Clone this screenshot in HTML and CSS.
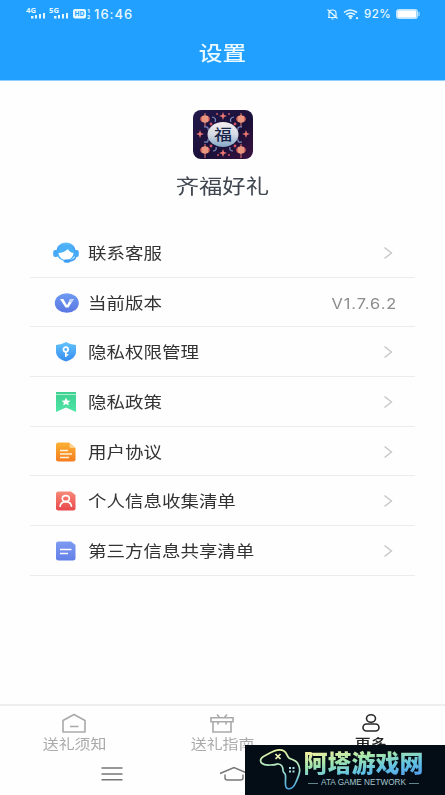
FILE: index.html
```html
<!DOCTYPE html>
<html lang="zh-CN">
<head>
<meta charset="utf-8">
<title>设置</title>
<link rel="stylesheet" href="styles.css">
</head>
<body>
<div class="screen">
  <header class="header">
    <div class="status">
      <svg class="signals" width="66" height="14" viewBox="0 0 66 14" fill="#e6f8ff">
        <text x="0" y="6" class="net" textLength="10" lengthAdjust="spacingAndGlyphs">4G</text>
        <path d="M5 9h2.500v2.500h-2.500zM9 8h2v3.500H9zM13 7h2v4.500h-2zM17 6h2v5.500h-2z"/>
        <text x="23" y="6" class="net" textLength="10" lengthAdjust="spacingAndGlyphs">5G</text>
        <path d="M28 9h2.500v2.500H28zM32 8h2v3.500h-2zM36 7h2v4.500h-2zM40 6h2v5.500h-2z"/>
        <rect x="47" y="2" width="13" height="9.500" rx="2"/>
        <text x="48.500" y="9.400" class="hd" textLength="10" lengthAdjust="spacingAndGlyphs">HD</text>
        <text x="61" y="6.300" class="sim">1</text><text x="61" y="11.800" class="sim">2</text>
      </svg>
      <span class="clock">16:46</span>
      <svg class="status-right" width="34" height="14" viewBox="0 0 34 14" fill="none" stroke="#e6f8ff" stroke-width="1.200">
        <path d="M2 10.500h9M3 10V6q0-3 3.500-3T10 6v4M5.500 12h2M1.500 2.500l10 9"/>
        <path d="M18 5.500q6-5 13 0M20 7.700q4.500-3.500 9 0M22.300 9.700q2.200-1.800 4.400 0" stroke-width="1.600"/>
        <circle cx="24.500" cy="11" r=".7" fill="#e6f8ff"/><circle cx="31" cy="11.200" r=".5"/>
      </svg>
      <span class="percent">92%</span>
      <svg width="26" height="12" viewBox="0 0 26 12"><rect x=".5" y="1.500" width="21" height="9" rx="2" fill="#9bd5ff" stroke="#bfe4ff"/><rect x="1.500" y="2.500" width="18.500" height="7" rx=".5" fill="#fff"/><path d="M23 4v4" stroke="#8fd0ff" stroke-width="1.500"/></svg>
    </div>
    <h1 class="title"><span class="wide">设置</span></h1>
  </header>

  <section class="brand">
    <svg class="logo" width="60" height="49" viewBox="0 0 60 49">
      <defs>
        <linearGradient id="night" x1="0" y1="0" x2="1" y2="1"><stop offset="0" stop-color="#22184a"/><stop offset=".6" stop-color="#1b1038"/><stop offset="1" stop-color="#3c123f"/></linearGradient>
        <linearGradient id="moon" x1="0" y1="0" x2="0" y2="1"><stop offset="0" stop-color="#f6eef0"/><stop offset=".5" stop-color="#d5dae4"/><stop offset="1" stop-color="#84a6c8"/></linearGradient>
        <g id="lamp"><ellipse rx="4.800" ry="3.800" fill="#d8685f"/><path d="M-2-3v6M0-4v8M2-3v6" stroke="#ffd0a8" stroke-width=".9"/><path d="M0-6v2M0 4v4" stroke="#e27872"/></g>
        <path id="spark" d="M0-4l1 3 3 1-3 1-1 3-1-3-3-1 3-1z" fill="#ee7775"/>
      </defs>
      <rect width="60" height="49" rx="8" fill="url(#night)"/>
      <use href="#lamp" x="12" y="9"/><use href="#lamp" x="48" y="9"/><use href="#lamp" x="12" y="40"/><use href="#lamp" x="48" y="40"/>
      <use href="#spark" x="30" y="6"/><use href="#spark" x="7" y="24"/><use href="#spark" x="53" y="24"/><use href="#spark" x="30" y="43"/>
      <g fill="none" stroke="#7f91c5" stroke-width="1.200"><path d="M19 7q5 1 3 5M41 7q-5 1-3 5M11 17q5-1 4 3M49 17q-5-1-4 3M11 32q5 1 4-3M49 32q-5 1-4-3M20 41q4 0 3-4M40 41q-4 0-3-4"/></g>
      <g fill="#ce5666"><circle cx="18" cy="14" r="1.400"/><circle cx="42" cy="14" r="1.400"/><circle cx="18" cy="36" r="1.400"/><circle cx="42" cy="36" r="1.400"/><circle cx="24" cy="4" r="1"/><circle cx="36" cy="4" r="1"/><circle cx="25" cy="45" r="1"/><circle cx="36" cy="45" r="1"/></g>
      <ellipse cx="30" cy="24.500" rx="15.500" ry="12.500" fill="url(#moon)"/>
      <text x="21" y="30" class="fu" textLength="18" lengthAdjust="spacingAndGlyphs">福</text>
    </svg>
    <h2 class="name"><span class="wide">齐福好礼</span></h2>
  </section>

  <svg width="0" height="0" class="defs"><defs>
    <linearGradient id="blue" x1="0" y1="0" x2="0" y2="1"><stop stop-color="#62c3fb"/><stop offset="1" stop-color="#368cf0"/></linearGradient>
    <linearGradient id="indigo" x1="0" y1="0" x2="0" y2="1"><stop stop-color="#6d9bf2"/><stop offset="1" stop-color="#5b76e2"/></linearGradient>
    <linearGradient id="green" x1="0" y1="0" x2="0" y2="1"><stop stop-color="#3fcf92"/><stop offset="1" stop-color="#4ee5a5"/></linearGradient>
    <linearGradient id="orange" x1="0" y1="0" x2="0" y2="1"><stop stop-color="#fbb135"/><stop offset="1" stop-color="#f57d1f"/></linearGradient>
    <linearGradient id="red" x1="0" y1="0" x2="0" y2="1"><stop stop-color="#f78a78"/><stop offset="1" stop-color="#e9484c"/></linearGradient>
    <linearGradient id="peri" x1="0" y1="0" x2="0" y2="1"><stop stop-color="#7d9bf0"/><stop offset="1" stop-color="#6380e8"/></linearGradient>
  </defs></svg>

  <ul class="menu">
    <li class="row">
      <svg class="icon" width="26" height="22" viewBox="0 0 26 22"><path d="M3.500 9C4-2.500 22-2.500 22.500 9" fill="url(#blue)"/><ellipse cx="13" cy="11" rx="9" ry="8" fill="#4ab0f7"/><rect x=".2" y="8" width="5" height="7" rx="2" fill="#47a9f6"/><rect x="20.800" y="8" width="5" height="7" rx="2" fill="#47a9f6"/><path d="M5.500 11q5 0 9.500-4 1 3 5.500 4-.5 6-7.500 7.500-7-1.500-7.500-7.500z" fill="#fff"/><path d="M23 14q-1 5-8 5" fill="none" stroke="#3f9df4" stroke-width="1.500"/><ellipse cx="14" cy="19" rx="3.500" ry="1.800" fill="#3f9df4"/></svg>
      <span class="label wide">联系客服</span>
      <svg class="arrow" width="10" height="14" viewBox="0 0 10 14"><path d="M1.500 1.500L8.500 7l-7 5.500"/></svg>
    </li>
    <li class="row">
      <svg class="icon" width="26" height="22" viewBox="0 0 26 22"><ellipse cx="13.800" cy="11" rx="12" ry="9.800" fill="url(#indigo)"/><path d="M7 7h3.300l3.700 6.200L17.200 7h3.600l-5.300 8.500h-3z" fill="#fff"/><path d="M17.200 7h3.600l-2 3.200h-3.200z" fill="#c5d6fc"/></svg>
      <span class="label wide">当前版本</span>
      <span class="version">V1.7.6.2</span>
    </li>
    <li class="row">
      <svg class="icon" width="26" height="22" viewBox="0 0 26 22"><path d="M13 1q4 2.500 10 3v7.500q-.5 6-10 9-9.500-3-10-9V4Q9 3.500 13 1z" fill="url(#blue)"/><circle cx="12.800" cy="8.500" r="2.300" fill="none" stroke="#fff" stroke-width="1.700"/><path d="M12.800 11v5M13 13.800h2.300" stroke="#fff" stroke-width="1.600"/></svg>
      <span class="label wide">隐私权限管理</span>
      <svg class="arrow" width="10" height="14" viewBox="0 0 10 14"><path d="M1.500 1.500L8.500 7l-7 5.500"/></svg>
    </li>
    <li class="row">
      <svg class="icon" width="26" height="22" viewBox="0 0 26 22"><path d="M3 1h20v20l-10-4.500L3 21z" fill="url(#green)"/><path d="M3 3.500h20" stroke="#a8efcf"/><path d="M13 6.800l1.300 2.700 3.200.3-2.400 2 .8 2.800-2.900-1.500-2.900 1.500.8-2.800-2.400-2 3.200-.3z" fill="#fff"/></svg>
      <span class="label wide">隐私政策</span>
      <svg class="arrow" width="10" height="14" viewBox="0 0 10 14"><path d="M1.500 1.500L8.500 7l-7 5.500"/></svg>
    </li>
    <li class="row">
      <svg class="icon" width="26" height="22" viewBox="0 0 26 22"><path d="M5.500 1.500H16L22.500 7v11.500q0 2-2.500 2H5.500q-2.500 0-2.500-2v-15q0-2 2.500-2z" fill="url(#orange)"/><path d="M16.500 2v3.500q0 1.500 2 1.500h4z" fill="#ffd18a"/><path d="M7 9.500h8M7 13h12M7 16.500h9" stroke="#fff0d8" stroke-width="1.300"/></svg>
      <span class="label wide">用户协议</span>
      <svg class="arrow" width="10" height="14" viewBox="0 0 10 14"><path d="M1.500 1.500L8.500 7l-7 5.500"/></svg>
    </li>
    <li class="row">
      <svg class="icon" width="26" height="22" viewBox="0 0 26 22"><path d="M5.500 1.500H18L22.500 5v13.500q0 2-2.500 2H5.500q-2.500 0-2.500-2v-15q0-2 2.500-2z" fill="url(#red)"/><g fill="none" stroke="#fff" stroke-width="1.600"><ellipse cx="12.800" cy="8.500" rx="3.500" ry="2.900"/><path d="M7 16.800q.5-5 5.800-5.200 5.300.2 5.800 5.200"/></g></svg>
      <span class="label wide">个人信息收集清单</span>
      <svg class="arrow" width="10" height="14" viewBox="0 0 10 14"><path d="M1.500 1.500L8.500 7l-7 5.500"/></svg>
    </li>
    <li class="row">
      <svg class="icon" width="26" height="22" viewBox="0 0 26 22"><path d="M5.500 1.500H18L22.500 5v13.500q0 2-2.500 2H5.500q-2.500 0-2.500-2v-15q0-2 2.500-2z" fill="url(#peri)"/><path d="M7 9.500h11.500M7 13.500h8" stroke="#fff" stroke-width="1.500"/></svg>
      <span class="label wide">第三方信息共享清单</span>
      <svg class="arrow" width="10" height="14" viewBox="0 0 10 14"><path d="M1.500 1.500L8.500 7l-7 5.500"/></svg>
    </li>
  </ul>

  <nav class="tabs">
    <div class="tab">
      <svg width="26" height="21" viewBox="0 0 26 21" fill="none" stroke="#a9a9a9" stroke-width="1.600"><path d="M2 7.500L13 1.500l11 6V19H2zM9 13.500h8.500" stroke-linejoin="round"/></svg>
      <span class="wide">送礼须知</span>
    </div>
    <div class="tab">
      <svg width="26" height="21" viewBox="0 0 26 21" fill="none" stroke="#a9a9a9" stroke-width="1.600"><path d="M2 4.800h22v4H2zM4 8.800V19h18V8.800M9 8.500v3M17 8.500v3M8 1.500l2.500 3M18 1.500l-2.500 3"/></svg>
      <span class="wide">送礼指南</span>
    </div>
    <div class="tab active">
      <svg width="26" height="21" viewBox="0 0 26 21" fill="none" stroke="#292929" stroke-width="1.600"><ellipse cx="13" cy="5.500" rx="4.500" ry="3.800"/><rect x="5" y="11" width="16" height="7" rx="3.500"/></svg>
      <span class="wide">更多</span>
    </div>
  </nav>

  <div class="system">
    <svg width="22" height="14" viewBox="0 0 22 14" stroke="#777" stroke-width="1.400"><path d="M.5 1h21M.5 7h21M.5 12.700h21"/></svg>
    <svg width="30" height="16" viewBox="0 0 30 16" fill="none" stroke="#777" stroke-width="1.400"><path d="M1 7.500L15 1.500l14 6M6 8.500V12q0 2 2.500 2h13q2.500 0 2.500-2V8.500"/></svg>
  </div>

  <aside class="watermark">
    <svg class="pad" width="42" height="44" viewBox="0 0 42 44" fill="none">
      <defs><linearGradient id="neon" x1="0" y1="0" x2="0" y2="1"><stop stop-color="#e8f5a2"/><stop offset=".45" stop-color="#a9e5c5"/><stop offset="1" stop-color="#4aa8e0"/></linearGradient></defs>
      <path d="M2.500 15C-.5 11 4 8.500 9 6c6-3.500 12-5.500 16-3 3 1.500 2.500 5 5 7 3 2 6 1.500 8.500 5 4.500 7 1 13-1.500 19-2 5-5.500 7.500-8.500 6.500-3.500-1-1.500-7-2-13-.2-3-2.500-2.500-2.500-5 0-3-1.500-6-4.500-6.500-2-.4-3 1-5.500.8-4 0-7.500 1.500-11.500-1.800z" stroke="url(#neon)" stroke-width="1.700"/>
      <path d="M16.500 6l5 5M21.500 6l-5 5" stroke="#eff6b5" stroke-width="1.700"/>
      <g fill="#a7dde0"><path d="M30 19h2v2h-2zM33.500 19h2v2h-2zM30 22.500h2v2h-2zM33.500 22.500h2v2h-2z"/></g>
    </svg>
    <div class="mark">
      <span class="mark-name">阿塔游戏网</span>
      <span class="mark-sub">ATA GAME NETWORK</span>
    </div>
  </aside>
</div>
</body>
</html>
```
FILE: styles.css
```css
* { box-sizing: border-box; }
body { margin: 0; background: #fff; font-family: Roboto, "Noto Sans CJK SC", sans-serif; }
h1, h2, ul { margin: 0; padding: 0; font-weight: 400; list-style: none; }
svg { display: block; flex: none; }
.screen { position: relative; display: flex; flex-direction: column; width: 445px; height: 795px; overflow: hidden; background: #fefefe; }
.wide { display: inline-block; white-space: nowrap; transform: scaleX(1.155); }

.header { height: 81px; background: #21a0ff; border-bottom: 1px solid #8fd0ff; color: #e9f9ff; }
.status { display: flex; align-items: center; height: 28px; padding: 0 23px 0 26px; }
.net { font: 700 6.5px "Open Sans", sans-serif; }
.hd { font: 700 7px "Open Sans", sans-serif; fill: #21a0ff; }
.sim { font: 700 5.5px "Open Sans", sans-serif; }
.clock { width: 42px; margin-left: 2px; font: 500 13px Inter, sans-serif; letter-spacing: 1px; white-space: nowrap; }
.status-right { margin-left: auto; margin-right: 4px; }
.percent { width: 28px; margin-right: 4px; font: 500 11.5px Inter, sans-serif; letter-spacing: .5px; white-space: nowrap; }
.title { display: flex; justify-content: center; padding-top: 1px; font-size: 20.5px; line-height: 50px; font-weight: 500; }

.brand { display: flex; flex-direction: column; align-items: center; height: 147px; padding-top: 29px; }
.fu { font: 500 15px "Noto Sans CJK SC", sans-serif; fill: #17254a; }
.name { margin-top: 11px; font-size: 20.2px; line-height: 34px; color: #3f4650; }
.defs { position: absolute; }

.menu { width: 385px; margin-left: 30px; }
.row { display: flex; align-items: center; height: 49.7px; padding: 1px 22px 0 23px; border-bottom: 1px solid #ececec; }
.label { margin-left: 9px; padding-top: 2px; font-size: 16px; line-height: 24px; color: #333; transform-origin: left; }
.arrow { margin-left: auto; fill: none; stroke: #c4c4c4; stroke-width: 1.3; }
.version { margin: 2px -4px 0 auto; font: 400 14px Inter, sans-serif; letter-spacing: .8px; color: #8c8c8c; transform: scaleX(1.17); transform-origin: right; }

.tabs { display: flex; height: 57px; margin-top: auto; border-top: 2px solid #eee; }
.tab { display: flex; flex: 1; flex-direction: column; align-items: center; padding-top: 7px; font-size: 13.8px; line-height: 20px; color: #aaa; }
.active { color: #222; font-weight: 500; }
.system { display: flex; align-items: center; gap: 96px; height: 34px; padding: 0 0 8px 101px; }

.watermark { position: absolute; right: 0; bottom: 0; display: flex; width: 200px; height: 50px; padding: 3px 0 0 14px; background: #040d16; }
.mark { display: flex; flex-direction: column; align-items: center; margin-left: 2px; width: 121px; }
.mark-name { font: 900 24px/27px "Noto Sans CJK SC", sans-serif; white-space: nowrap; color: transparent; background: linear-gradient(170deg, #f2f0a0 12%, #a4e6ac 40%, #62c3e3 70%, #529bea); -webkit-background-clip: text; background-clip: text; }
.mark-sub { display: flex; align-items: center; gap: 3px; margin-top: 3px; font: 400 8.2px/10px "Liberation Sans", sans-serif; white-space: nowrap; color: #a5c8ce; }
.mark-sub::before, .mark-sub::after { content: ""; width: 10px; height: 1px; background: #62858e; }
```
